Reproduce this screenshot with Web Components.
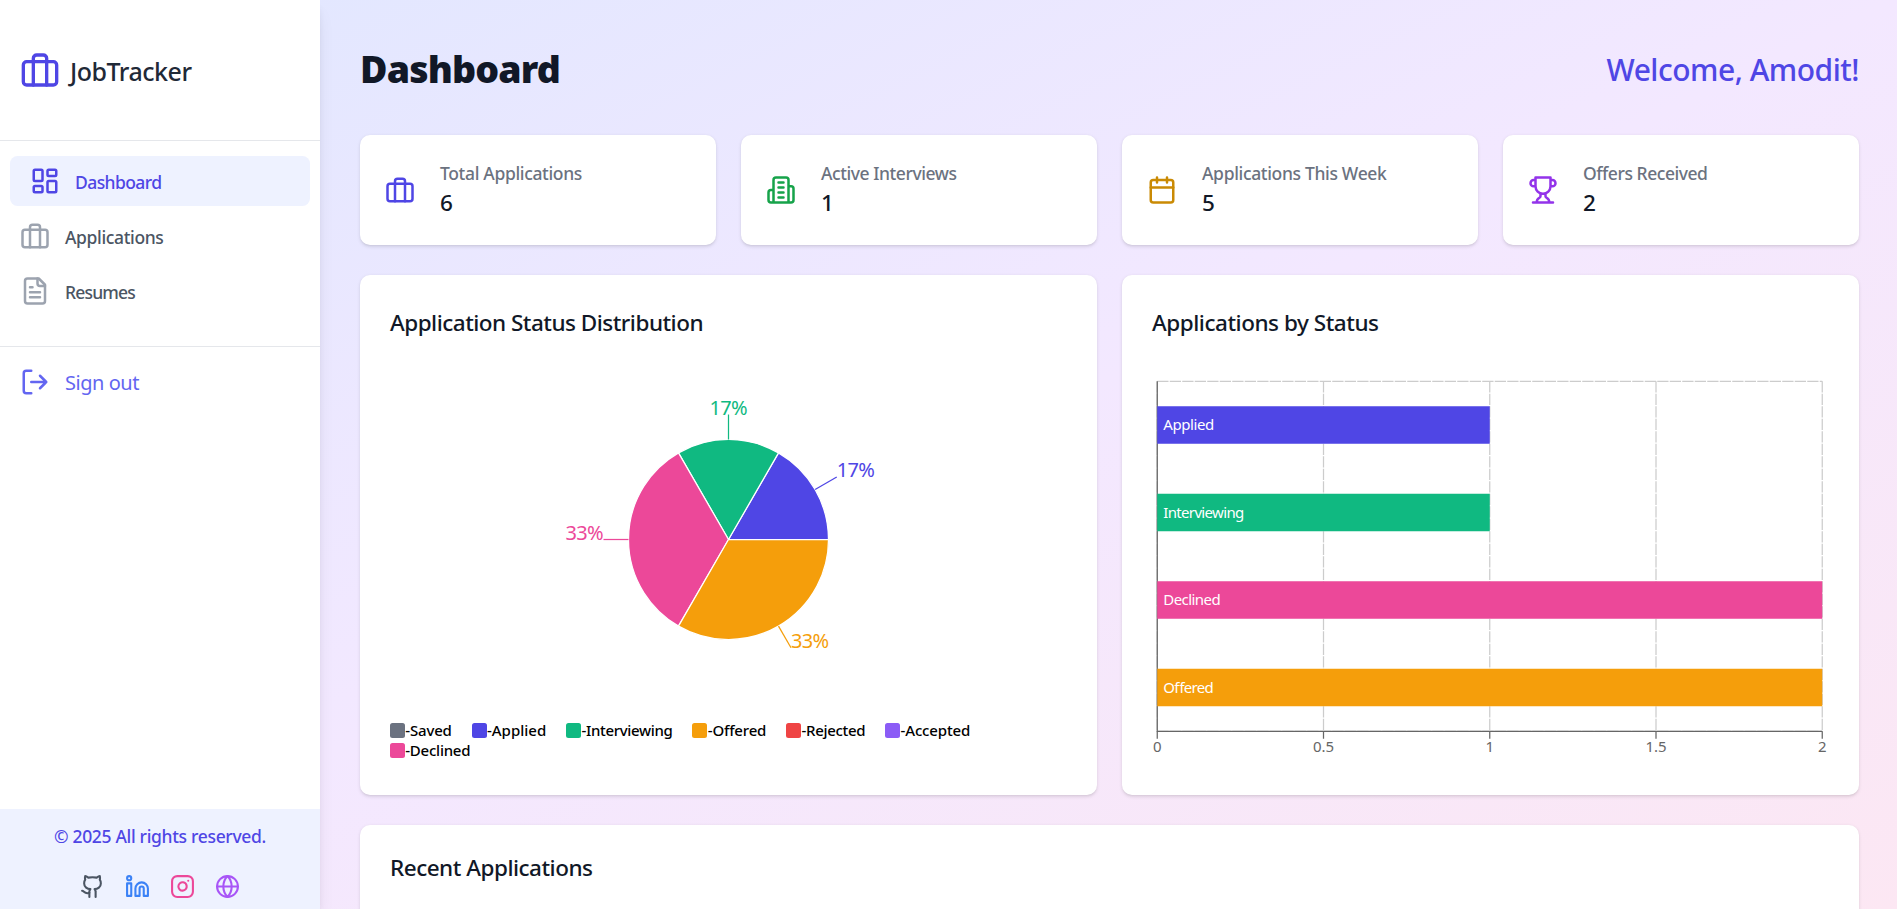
<!DOCTYPE html>
<html lang="en">
<head>
<meta charset="utf-8">
<title>JobTracker</title>
<style>
html,body{margin:0;height:100%;overflow:hidden;background:#fff}
body{font-family:"Noto Sans","Open Sans",sans-serif;-webkit-font-smoothing:antialiased}
</style>
</head>
<body>
<job-tracker></job-tracker>
<script>
const ICONS={
briefcase:'<rect width="20" height="14" x="2" y="7" rx="2"/><path d="M16 21V5a2 2 0 0 0-2-2h-4a2 2 0 0 0-2 2v16"/>',
dashboard:'<rect width="7" height="9" x="3" y="3" rx="1"/><rect width="7" height="5" x="14" y="3" rx="1"/><rect width="7" height="9" x="14" y="12" rx="1"/><rect width="7" height="5" x="3" y="16" rx="1"/>',
file:'<path d="M15 2H6a2 2 0 0 0-2 2v16a2 2 0 0 0 2 2h12a2 2 0 0 0 2-2V7Z"/><path d="M14 2v4a2 2 0 0 0 2 2h4M10 9H8M16 13H8M16 17H8"/>',
logout:'<path d="M9 21H5a2 2 0 0 1-2-2V5a2 2 0 0 1 2-2h4M16 17l5-5-5-5M21 12H9"/>',
building:'<path d="M6 22V4a2 2 0 0 1 2-2h8a2 2 0 0 1 2 2v18ZM6 12H4a2 2 0 0 0-2 2v6a2 2 0 0 0 2 2h2M18 9h2a2 2 0 0 1 2 2v9a2 2 0 0 1-2 2h-2M10 6h4M10 10h4M10 14h4M10 18h4"/>',
calendar:'<rect width="18" height="18" x="3" y="4" rx="2"/><path d="M8 2v4M16 2v4M3 10h18"/>',
trophy:'<path d="M6 9H4.5a2.5 2.5 0 0 1 0-5H6M18 9h1.5a2.5 2.5 0 0 0 0-5H18M4 22h16M10 14.66V17c0 .55-.47.98-.97 1.21C7.85 18.75 7 20.24 7 22M14 14.66V17c0 .55.47.98.97 1.21C16.15 18.75 17 20.24 17 22M18 2H6v7a6 6 0 0 0 12 0V2Z"/>',
github:'<path d="M15 22v-4a4.8 4.8 0 0 0-1-3.5c3 0 6-2 6-5.5.08-1.25-.27-2.48-1-3.5.28-1.15.28-2.35 0-3.5 0 0-1 0-3 1.5-2.64-.5-5.36-.5-8 0C6 2 5 2 5 2c-.3 1.15-.3 2.35 0 3.5A5.403 5.403 0 0 0 4 9c0 3.5 3 5.5 6 5.5-.39.49-.68 1.05-.85 1.65-.17.6-.22 1.23-.15 1.85v4"/><path d="M9 18c-4.51 2-5-2-7-2"/>',
linkedin:'<path d="M16 8a6 6 0 0 1 6 6v7h-4v-7a2 2 0 0 0-4 0v7h-4v-7a6 6 0 0 1 6-6z"/><rect width="4" height="12" x="2" y="9"/><circle cx="4" cy="4" r="2"/>',
instagram:'<rect width="20" height="20" x="2" y="2" rx="5"/><path d="M16 11.37A4 4 0 1 1 12.63 8 4 4 0 0 1 16 11.37zM17.5 6.5h.01"/>',
globe:'<circle cx="12" cy="12" r="10"/><path d="M12 2a14.5 14.5 0 0 0 0 20 14.5 14.5 0 0 0 0-20M2 12h20"/>'
};
const define=(name,html,setup)=>customElements.define(name,class extends HTMLElement{
  connectedCallback(){
    if(this.shadowRoot)return;
    const root=this.attachShadow({mode:'open'});
    root.innerHTML=typeof html==='function'?html(this):html;
    if(setup)setup(this,root);
  }
});

define('app-icon',el=>`<style>:host{display:block;flex:none;width:${el.getAttribute('size')||30}px;height:${el.getAttribute('size')||30}px}svg{display:block;width:100%;height:100%}</style>
<svg viewBox="0 0 24 24" fill="none" stroke="currentColor" stroke-width="2" stroke-linecap="round" stroke-linejoin="round">${ICONS[el.getAttribute('name')]}</svg>`);

/* Single-line label whose tracking is adjusted to the advance width given in "w". */
define('fit-text','<style>:host{display:inline-block;white-space:nowrap}</style><span><slot></slot></span>',(el,root)=>{
  const w=+el.getAttribute('w');
  if(!w)return;
  const n=el.textContent.length;
  el.style.letterSpacing=((w-root.querySelector('span').getBoundingClientRect().width)/n)+'px';
});

define('nav-item',`<style>
:host{display:flex;align-items:center;height:50px;padding-left:20px;gap:15px;color:#4b5563;font-size:17.5px;font-weight:550;line-height:25px}
:host([active]){margin:0 10px;background:#eef2ff;border-radius:7.5px;color:#4f46e5}
::slotted(app-icon){color:#9ca3af}
:host([active]) ::slotted(app-icon){color:#4f46e5}
.t{padding-top:2px}
</style><slot name="icon"></slot><div class="t"><slot></slot></div>`);

define('side-bar',`<style>
:host{display:flex;flex-direction:column;width:320px;height:909px;flex:none;background:#fff;position:relative;z-index:1;box-shadow:0 12.5px 18.75px -3.75px rgba(0,0,0,.1),0 5px 7.5px -2.5px rgba(0,0,0,.1)}
header{box-sizing:border-box;height:141px;display:flex;align-items:center;gap:10px;padding:0 20px 1px;border-bottom:1px solid #e5e7eb;color:#4f46e5;font-size:25px;font-weight:500;line-height:35px}
header fit-text{color:#1f2937;margin-top:3px}
nav{display:flex;flex-direction:column;gap:5px;padding:15px 0 30px;border-bottom:1px solid #e5e7eb}
.out{display:flex;align-items:center;gap:15px;height:70px;padding-left:20px;color:#6366f1;font-size:20px;line-height:30px}
.out fit-text{padding-top:1px}
footer{margin-top:auto;height:100px;background:#eef2ff;color:#4f46e5;display:flex;flex-direction:column;align-items:center;font-size:17.5px;font-weight:550;line-height:25px;box-sizing:border-box;padding-top:15px}
.links{display:flex;gap:20px;margin-top:25px}
</style>
<header><app-icon name="briefcase" size="40"></app-icon><fit-text w="121.5">JobTracker</fit-text></header>
<nav>
<nav-item active><app-icon slot="icon" name="dashboard"></app-icon><fit-text w="86.5">Dashboard</fit-text></nav-item>
<nav-item><app-icon slot="icon" name="briefcase"></app-icon><fit-text w="98.5">Applications</fit-text></nav-item>
<nav-item><app-icon slot="icon" name="file"></app-icon><fit-text w="70">Resumes</fit-text></nav-item>
</nav>
<div class="out"><app-icon name="logout"></app-icon><fit-text w="74">Sign out</fit-text></div>
<footer><fit-text w="212">© 2025 All rights reserved.</fit-text>
<div class="links"><app-icon name="github" size="25" style="color:#4b5563"></app-icon><app-icon name="linkedin" size="25" style="color:#3b82f6"></app-icon><app-icon name="instagram" size="25" style="color:#ec4899"></app-icon><app-icon name="globe" size="25" style="color:#a855f7"></app-icon></div></footer>`);

define('stat-card',`<style>
:host{display:flex;align-items:center;gap:25px;box-sizing:border-box;height:110px;padding:25px;background:#fff;border-radius:10px;box-shadow:0 1.25px 3.75px rgba(0,0,0,.1),0 1.25px 2.5px -1.25px rgba(0,0,0,.1)}
.l{box-sizing:border-box;height:25px;padding-top:1px;line-height:25px;font-size:17.5px;font-weight:550;color:#6b7280}
.v{height:35px;line-height:35px;font-size:22.5px;font-weight:550;color:#111827}
</style><slot name="icon"></slot><div><div class="l"><slot></slot></div><div class="v"><slot name="value"></slot></div></div>`);

define('panel-card',`<style>
:host{display:block;box-sizing:border-box;padding:30px;background:#fff;border-radius:10px;box-shadow:0 1.25px 3.75px rgba(0,0,0,.1),0 1.25px 2.5px -1.25px rgba(0,0,0,.1)}
h2{margin:0;height:35px;font-size:22.5px;font-weight:500;line-height:35px;color:#111827}
</style><h2><slot name="title"></slot></h2><slot></slot>`);

define('pie-chart',()=>{
  const cx=338.5,cy=199.5,r=100,pt=(a,q)=>[cx+q*Math.cos(a*Math.PI/180),cy-q*Math.sin(a*Math.PI/180)];
  const data=[[0,60,'#4f46e5','17%','start',38],[60,120,'#10b981','17%','middle',38],[120,240,'#ec4899','33%','end',38],[240,360,'#f59e0b','33%','start',38]];
  let lines='',slices='';
  for(const [a,b,c,t,anchor,w] of data){
    const [x1,y1]=pt(a,r),[x2,y2]=pt(b,r),m=(a+b)/2,[p,q]=pt(m,r),[u,v]=pt(m,r+25);
    slices+=`<path d="M${cx} ${cy}L${x1} ${y1}A${r} ${r} 0 0 0 ${x2} ${y2}Z" fill="${c}" stroke="#fff" stroke-width="1.25"/>`;
    lines+=`<path d="M${p} ${q}L${u} ${v}" stroke="${c}" stroke-width="1.25"/><text x="${u}" y="${v}" fill="${c}" text-anchor="${anchor}" textLength="${w}">${t}</text>`;
  }
  return `<style>:host{display:block}svg{display:block;font-size:20px;overflow:visible}</style><svg width="677" height="375">${slices}${lines}</svg>`;
});

define('status-legend',()=>{
  const items=[['Saved','#6b7280',46.4],['Applied','#4f46e5',59.2],['Interviewing','#10b981',91],['Offered','#f59e0b',58.4],['Rejected','#ef4444',63.8],['Accepted','#8b5cf6',69.5],['Declined','#ec4899',65]];
  return `<style>:host{display:flex;flex-wrap:wrap;font-size:15px;font-weight:500;line-height:20px;color:#000}
  div{display:flex;align-items:center;height:20px;margin-right:20px}i{width:15px;height:15px;border-radius:2.5px;margin-right:.3px}</style>`+
  items.map(([t,c,w])=>`<div><i style="background:${c}"></i><fit-text w="${w}">-${t}</fit-text></div>`).join('');
});

define('bar-chart',()=>{
  const x0=5.25,y0=41.25,w=665,h=350,xs=[0,.25,.5,.75,1].map(f=>x0+f*w);
  const grid=xs.map(x=>`<path d="M${x} ${y0}V${y0+h}"/>`).join('')+`<path d="M${x0} ${y0}H${x0+w}M${x0} ${y0+h}H${x0+w}"/>`;
  const bars=[['Applied',1,'#4f46e5',51],['Interviewing',1,'#10b981',81],['Declined',2,'#ec4899',57.5],['Offered',2,'#f59e0b',50.5]].map(([t,v,c,tw],i)=>{
    const y=y0+25+i*87.5;
    return `<rect x="${x0}" y="${y}" width="${w*v/2}" height="37.5" fill="${c}"/><text x="${x0+6}" y="${y+23.75}" fill="#fff" textLength="${tw}">${t}</text>`;}).join('');
  const ticks=xs.map(x=>`<path d="M${x} ${y0+h}v7.5"/>`).join('');
  const labels=['0','0.5','1','1.5','2'].map((t,i)=>`<text x="${xs[i]}" y="412" fill="#666" text-anchor="middle">${t}</text>`).join('');
  return `<style>:host{display:block}svg{display:block;font-size:15px;overflow:visible}</style><svg width="677" height="425">
  <g stroke="#ccc" stroke-width="1.25" stroke-dasharray="11.25 1.25">${grid}</g>
  <g stroke="#666" stroke-width="1.25"><path d="M${x0} ${y0}V${y0+h}H${x0+w}" fill="none"/>${ticks}</g>${bars}${labels}</svg>`;
});

define('job-tracker',`<style>
:host{display:flex;height:909px;overflow:hidden;background:linear-gradient(to bottom right,#e0e7ff,#f3e8ff,#fce7f3)}
main{flex:1;min-width:0;padding:40px 38px 0 40px;height:909px;box-sizing:border-box;overflow:hidden}
.top{display:flex;justify-content:space-between;align-items:center;height:60px;margin-bottom:35px}
h1{margin:0 0 4px;font-size:37.5px;font-weight:900;line-height:45px;color:#111827}
.hi{font-size:30px;font-weight:500;line-height:40px;color:#4f46e5}
.stats{display:grid;grid-template-columns:repeat(4,1fr);gap:25px}
.charts{display:grid;grid-template-columns:1fr 1fr;gap:25px;margin:30px 0}
.charts panel-card{height:520px}
.recent{padding-top:25px;height:300px}
</style>
<side-bar></side-bar>
<main>
<div class="top"><h1><fit-text w="200">Dashboard</fit-text></h1><div class="hi"><fit-text w="252.5">Welcome, Amodit!</fit-text></div></div>
<div class="stats">
<stat-card><app-icon slot="icon" name="briefcase" style="color:#4f46e5"></app-icon><fit-text w="142">Total Applications</fit-text><span slot="value">6</span></stat-card>
<stat-card><app-icon slot="icon" name="building" style="color:#16a34a"></app-icon><fit-text w="135.5">Active Interviews</fit-text><span slot="value">1</span></stat-card>
<stat-card><app-icon slot="icon" name="calendar" style="color:#ca8a04"></app-icon><fit-text w="184.5">Applications This Week</fit-text><span slot="value">5</span></stat-card>
<stat-card><app-icon slot="icon" name="trophy" style="color:#9333ea"></app-icon><fit-text w="124.5">Offers Received</fit-text><span slot="value">2</span></stat-card>
</div>
<div class="charts">
<panel-card><fit-text slot="title" w="313">Application Status Distribution</fit-text><pie-chart></pie-chart><status-legend style="margin-top:5px"></status-legend></panel-card>
<panel-card><fit-text slot="title" w="226.5">Applications by Status</fit-text><bar-chart></bar-chart></panel-card>
</div>
<panel-card class="recent"><fit-text slot="title" w="202.5">Recent Applications</fit-text></panel-card>
</main>`);
</script>
</body>
</html>
